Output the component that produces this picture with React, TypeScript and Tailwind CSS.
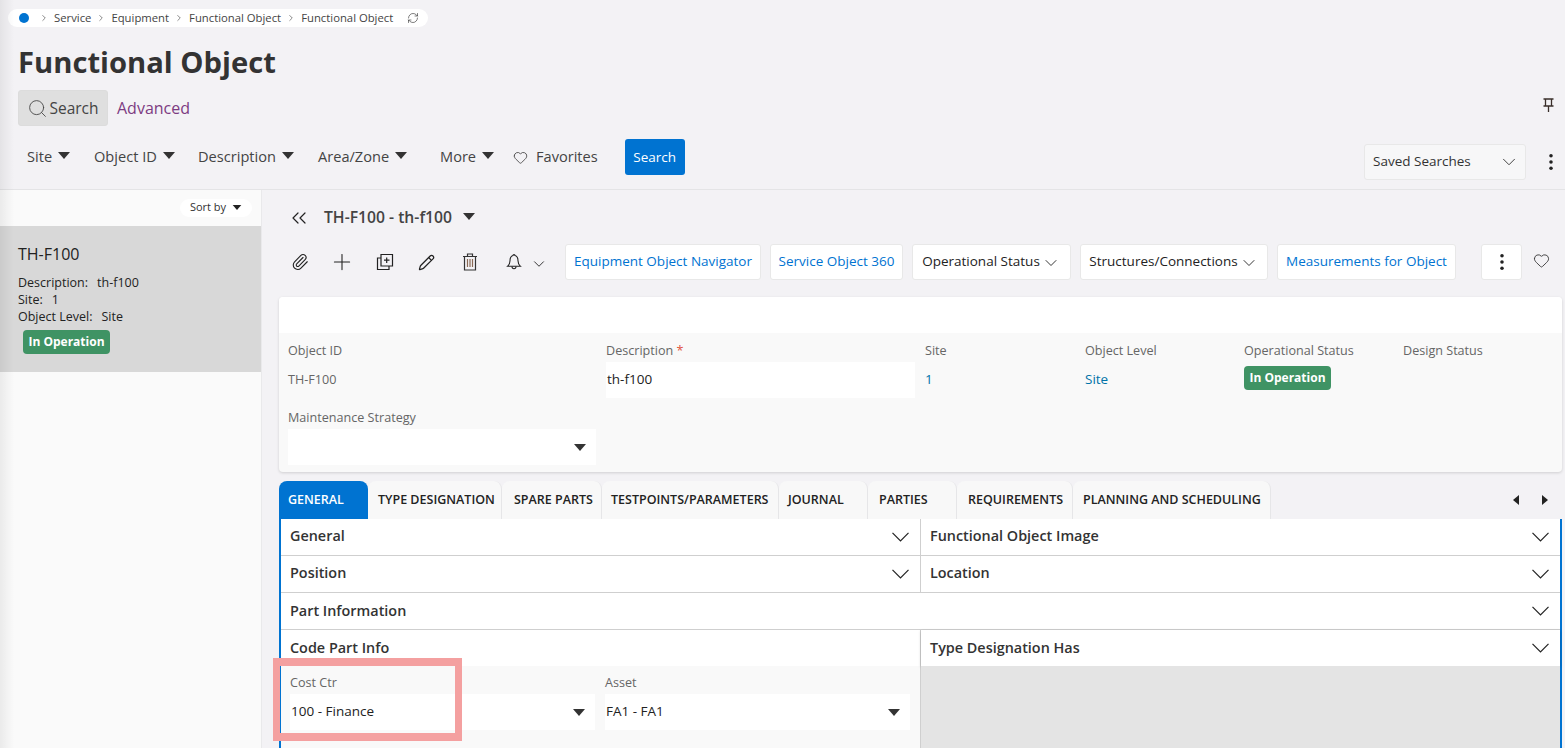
import { ChevronDown, ChevronRight, ChevronsLeft, Heart, Paperclip, Pencil, Plus, RefreshCw, Search } from 'lucide-react'

function Caret({ className = '' }: { className?: string }) {
  return (
    <svg viewBox="0 0 12 7" className={`h-[7px] w-[12px] shrink-0 fill-[#333] ${className}`}>
      <path d="M0 0h12L6 7z" />
    </svg>
  )
}

function SmallCaret() {
  return (
    <svg viewBox="0 0 12 7" className="h-[5px] w-[10px] shrink-0 fill-[#222]">
      <path d="M0 0h12L6 7z" />
    </svg>
  )
}

function Kebab() {
  return (
    <svg viewBox="0 0 4 18" className="h-[16px] w-[4px] fill-[#222]">
      <circle cx="2" cy="2" r="2" />
      <circle cx="2" cy="9" r="2" />
      <circle cx="2" cy="16" r="2" />
    </svg>
  )
}

function Crumb({ children }: { children: string }) {
  return (
    <>
      <ChevronRight size={10} strokeWidth={1.5} className="mx-[5px] shrink-0 text-[#444]" />
      <span className="whitespace-nowrap">{children}</span>
    </>
  )
}

function Filter({ label, width }: { label: string; width: string }) {
  return (
    <div className={`flex items-center gap-[6px] text-[14.6px] text-[#444] ${width}`}>
      <span>{label}</span>
      <Caret className="mb-[3px]" />
    </div>
  )
}

function Badge({ className = '' }: { className?: string }) {
  return (
    <span className={`inline-flex h-[24px] w-[87px] items-center justify-center rounded-[4px] bg-[#3f9364] text-[12px] font-bold text-white ${className}`}>
      In Operation
    </span>
  )
}

function ActionButton({ label, link, width }: { label: string; link?: boolean; width: string }) {
  return (
    <button className={`flex h-[36px] items-center justify-center gap-[1px] rounded-[3px] border border-[#e8e8e8] bg-white pb-[1px] text-[13.5px] ${width} ${link ? 'text-[#0073d1]' : 'text-[#222]'}`}>
      {label}
      {!link && <ChevronDown size={20} strokeWidth={1.1} className="mt-[3px]" />}
    </button>
  )
}

function Field({ label, value }: { label: string; value: string }) {
  return (
    <div>
      <div className="text-[12.6px] leading-[18px] text-[#666]">{label}</div>
      <div className="mt-[9px] text-[13.5px] leading-[20px] text-[#0073a8]">{value}</div>
    </div>
  )
}

function SelectField({ label, value, width }: { label: string; value: string; width: string }) {
  return (
    <div className={width}>
      <div className="text-[12.6px] leading-[18px] text-[#666]">{label}</div>
      <div className="mt-[2px] flex h-[36px] items-center justify-between bg-white pl-[1px] pr-[10px] text-[13.5px] text-[#222]">
        <span className="pb-[2px]">{value}</span>
        <Caret />
      </div>
    </div>
  )
}

function Section({ title, chevron = true, low, className = '' }: { title?: string; chevron?: boolean; low?: boolean; className?: string }) {
  return (
    <div className={`flex h-[36px] items-center justify-between bg-white pl-[9px] pr-[11px] text-[14.4px] font-semibold text-[#333] ${className}`}>
      <span className={low ? '' : 'pb-[2px]'}>{title}</span>
      {chevron && (
        <svg viewBox="0 0 17 10" className="h-[10px] w-[17px] fill-none stroke-[#222] stroke-[1.2]">
          <path d="M.5.8l8 8 8-8" />
        </svg>
      )}
    </div>
  )
}

const tabs = [
  ['TYPE DESIGNATION', 'w-[134px] pl-[10px]'],
  ['SPARE PARTS', 'w-[100px] pl-[12px]'],
  ['TESTPOINTS/PARAMETERS', 'w-[177px] pl-[9px]'],
  ['JOURNAL', 'w-[89px] pl-[9px]'],
  ['PARTIES', 'w-[89px] pl-[11px]'],
  ['REQUIREMENTS', 'w-[116px] pl-[11px]'],
  ['PLANNING AND SCHEDULING', 'w-[198px] pl-[10px]'],
]

export default function App() {
  return (
    <div className="relative flex h-[748px] w-[1565px] flex-col overflow-hidden bg-[#f3f2f5] font-['Open_Sans',sans-serif]">
      {/* page header */}
      <header className="h-[190px] shrink-0 border-b border-[#e4e4e6] pl-[18px]">
        <div className="ml-[-10px] pt-[9px]">
          <div className="flex h-[18px] w-[420px] items-center rounded-full bg-white pl-[11px] text-[11.3px] text-[#444]">
            <span className="mr-[5px] h-[10px] w-[10px] rounded-full bg-[#0073d1]" />
            <Crumb>Service</Crumb>
            <Crumb>Equipment</Crumb>
            <Crumb>Functional Object</Crumb>
            <Crumb>Functional Object</Crumb>
            <RefreshCw size={12} strokeWidth={1.25} className="ml-[14px] text-[#333]" />
          </div>
        </div>

        <h1 className="mt-[14px] text-[29.2px] font-bold leading-[42px] text-[#333]">Functional Object</h1>

        <div className="mt-[7px] flex items-center pr-[10px]">
          <div className="flex h-[36px] w-[90px] items-center justify-center rounded-[3px] border border-[#dcdcdc] bg-[#dfdfdf] text-[15.5px] text-[#444]">
            <Search size={21} strokeWidth={1} />
            <span className="pl-[1px] pt-[1px]">Search</span>
          </div>
          <span className="ml-[9px] text-[16px] text-[#7d3c82]">Advanced</span>
          <svg viewBox="0 0 11 14" className="ml-auto mr-[1px] mt-[-6px] h-[14px] w-[11px] fill-none stroke-[#3a2f2a] stroke-[1.3]">
            <path d="M.5 1h10M2.5 1v6.5M8.5 1v6.5M.5 8h10M5.5 8v6" />
          </svg>
        </div>

        <div className="mt-[8px] flex items-center pl-[9px]">
          <Filter label="Site" width="w-[67px]" />
          <Filter label="Object ID" width="w-[104px]" />
          <Filter label="Description" width="w-[120px]" />
          <Filter label="Area/Zone" width="w-[122px]" />
          <Filter label="More" width="w-[74px]" />
          <Heart size={15} strokeWidth={1.25} className="ml-[-1px] text-[#333]" />
          <span className="ml-[8px] text-[14.6px] text-[#444]">Favorites</span>
          <button className="ml-[27px] flex h-[36px] w-[60px] items-center justify-center rounded-[3px] bg-[#0073d1] text-[13.5px] text-white">
            Search
          </button>
          <div className="ml-auto mt-[10px] flex h-[36px] w-[162px] items-center justify-between rounded-[3px] border border-[#e8e8e8] bg-[#f7f7f8] pl-[8px] pr-[5px] text-[13.5px] text-[#333]">
            <span className="pb-[1px]">Saved Searches</span>
            <ChevronDown size={22} strokeWidth={1} />
          </div>
          <div className="ml-[23px] mr-[12px] mt-[10px]">
            <Kebab />
          </div>
        </div>
      </header>

      <div className="flex min-h-0 flex-1">
        {/* result list */}
        <aside className="w-[262px] shrink-0 border-r border-[#e9e9eb] bg-[#fafafa]">
          <div className="flex h-[36px] items-center justify-end pr-[9px]">
            <div className="flex h-[18px] w-[72px] items-center justify-center gap-[6px] rounded-full bg-white pb-[1px] text-[11px] text-[#333]">
              Sort by
              <SmallCaret />
            </div>
          </div>
          <div className="h-[146px] bg-[#d8d8d8] pl-[18px] pt-[16px] text-[#222]">
            <div className="text-[16px] leading-[24px]">TH-F100</div>
            <div className="mt-[8px] text-[12.5px] leading-[17px]">
              <div>Description:<span className="ml-[9px]">th-f100</span></div>
              <div>Site:<span className="ml-[9px]">1</span></div>
              <div>Object Level:<span className="ml-[9px]">Site</span></div>
            </div>
            <Badge className="ml-[5px] mt-[5px]" />
          </div>
        </aside>

        {/* detail */}
        <main className="min-w-0 flex-1 pl-[17px] pr-[3px]">
          <div className="flex h-[54px] items-center pl-[8px] pt-[1px]">
            <ChevronsLeft size={24} strokeWidth={1.2} className="text-[#222]" />
            <span className="ml-[13px] text-[15.7px] font-semibold text-[#444]">TH-F100 - th-f100</span>
            <Caret className="mb-[3px] ml-[11px]" />
          </div>

          <div className="flex h-[36px] items-center pl-[12px]">
            <Paperclip size={18} strokeWidth={1.5} className="text-[#222]" />
            <Plus size={26} strokeWidth={1} className="ml-[20px] text-[#222]" />
            <svg viewBox="0 0 18 18" className="ml-[21px] h-[18px] w-[18px] fill-none stroke-[#222] stroke-[1.2]">
              <path d="M5 1.5h11.5V13H5z" />
              <path d="M5 5H1.5v11.5H13V13" />
              <path d="M10.7 4.5v5.5M8 7.2h5.5" />
            </svg>
            <Pencil size={17} strokeWidth={1.75} className="ml-[24px] text-[#222]" />
            <svg viewBox="0 0 16 18" className="ml-[27px] h-[18px] w-[16px] fill-none stroke-[#333] stroke-[1.2]">
              <path d="M1 3.5h14M5.5 3.5V1h5v2.5M2.5 3.5V17h11V3.5" />
              <path d="M5.5 6v8M8 6v8M10.5 6v8" className="stroke-[#8a6a55]" />
            </svg>
            <svg viewBox="0 0 16 16" className="ml-[28px] h-[16px] w-[16px] fill-none stroke-[#222] stroke-[1.1]">
              <path d="M8 .6c-.6 0-1 .4-1 1C4.8 2.3 4 4.2 4 6.8c0 2.5-.8 4-2.5 5.5h13C12.8 10.8 12 9.3 12 6.8c0-2.6-.8-4.5-3-5.2 0-.6-.4-1-1-1z" />
              <path d="M6 12.6c0 1.2.9 2.2 2 2.2s2-1 2-2.2" />
            </svg>
            <ChevronDown size={18} strokeWidth={1.2} className="ml-[8px] mt-[3px] text-[#222]" />
            <div className="ml-[17px] flex items-center gap-[9px]">
              <ActionButton label="Equipment Object Navigator" link width="w-[196px]" />
              <ActionButton label="Service Object 360" link width="w-[133px]" />
              <ActionButton label="Operational Status" width="w-[159px]" />
              <ActionButton label="Structures/Connections" width="w-[188px]" />
              <ActionButton label="Measurements for Object" link width="w-[179px]" />
            </div>
            <button className="ml-[25px] flex h-[36px] w-[41px] items-center justify-center rounded-[3px] border border-[#e8e8e8] bg-white">
              <Kebab />
            </button>
            <Heart size={17} strokeWidth={1.25} className="ml-[11px] mt-[-4px] text-[#333]" />
          </div>

          {/* object card */}
          <section className="mt-[17px] h-[175px] overflow-hidden rounded-[4px] bg-[#f9f9f9] shadow-[0_1px_3px_#00000026]">
            <div className="h-[36px] bg-white" />
            <div className="grid grid-cols-[318px_319px_160px_159px_159px_1fr] pl-[9px] pt-[9px]">
              <div>
                <div className="text-[12.6px] leading-[18px] text-[#666]">Object ID</div>
                <div className="mt-[10px] text-[12.6px] leading-[20px] text-[#666]">TH-F100</div>
              </div>
              <div>
                <div className="text-[12.6px] leading-[18px] text-[#666]">
                  Description <span className="text-[#e0533d]">*</span>
                </div>
                <div className="mt-[2px] flex h-[36px] w-[309px] items-center bg-white pb-[2px] pl-[1px] text-[13.5px] text-[#222]">th-f100</div>
              </div>
              <Field label="Site" value="1" />
              <Field label="Object Level" value="Site" />
              <div>
                <div className="text-[12.6px] leading-[18px] text-[#666]">Operational Status</div>
                <Badge className="mt-[6px]" />
              </div>
              <div className="text-[12.6px] leading-[18px] text-[#666]">Design Status</div>
            </div>
            <div className="pl-[9px] pt-[11px]">
              <SelectField label="Maintenance Strategy" value="" width="w-[308px]" />
            </div>
          </section>

          {/* tabs */}
          <div className="mt-[9px] flex h-[38px] items-stretch">
            <div className="flex w-[89px] items-center rounded-t-[8px] bg-[#0073d1] pl-[9px] text-[12.5px] font-semibold text-white">GENERAL</div>
            {tabs.map(([label, cls]) => (
              <div
                key={label}
                className={`flex items-center whitespace-nowrap rounded-t-[8px] border-r border-[#e6e6e8] bg-[#f8f8f8] text-[12.5px] font-semibold text-[#222] ${cls}`}
              >
                {label}
              </div>
            ))}
            <div className="ml-auto mr-[14px] flex items-center gap-[23px]">
              <svg viewBox="0 0 6 10" className="h-[10px] w-[6px] fill-[#222]"><path d="M6 0v10L0 5z" /></svg>
              <svg viewBox="0 0 6 10" className="h-[10px] w-[6px] fill-[#222]"><path d="M0 0v10l6-5z" /></svg>
            </div>
          </div>

          {/* tab body */}
          <div className="h-[229px] border-x-2 border-[#0073d1]">
            <div className="grid grid-cols-[640px_1fr] border-b border-[#cfcfcf]">
              <Section title="General" className="border-r border-[#cfcfcf]" />
              <Section title="Functional Object Image" />
            </div>
            <div className="grid grid-cols-[640px_1fr] border-b border-[#cfcfcf]">
              <Section title="Position" className="border-r border-[#cfcfcf]" />
              <Section title="Location" />
            </div>
            <div className="border-b border-[#cfcfcf]">
              <Section title="Part Information" low />
            </div>
            <div className="grid grid-cols-[640px_1fr]">
              <div className="border-r border-[#cfcfcf]">
                <Section title="Code Part Info" chevron={false} low />
                <div className="flex h-[82px] gap-[10px] bg-[#f9f9f9] pl-[9px] pt-[8px]">
                  <SelectField label="Cost Ctr" value="100 - Finance" width="w-[305px]" />
                  <SelectField label="Asset" value="FA1 - FA1" width="w-[305px]" />
                </div>
              </div>
              <div>
                <Section title="Type Designation Has" low className="shadow-[0_1px_3px_#00000033]" />
                <div className="h-[82px] bg-[#e4e4e4]" />
              </div>
            </div>
          </div>
        </main>
      </div>

      {/* window edge shadow */}
      <div className="pointer-events-none absolute inset-y-0 left-0 w-[14px] bg-gradient-to-r from-[#00000010] to-transparent" />
      {/* annotation on the screenshot */}
      <div className="pointer-events-none absolute left-[273px] top-[658px] h-[83px] w-[189px] border-x-[7px] border-y-[8px] border-[#f4a0a0]" />
    </div>
  )
}
